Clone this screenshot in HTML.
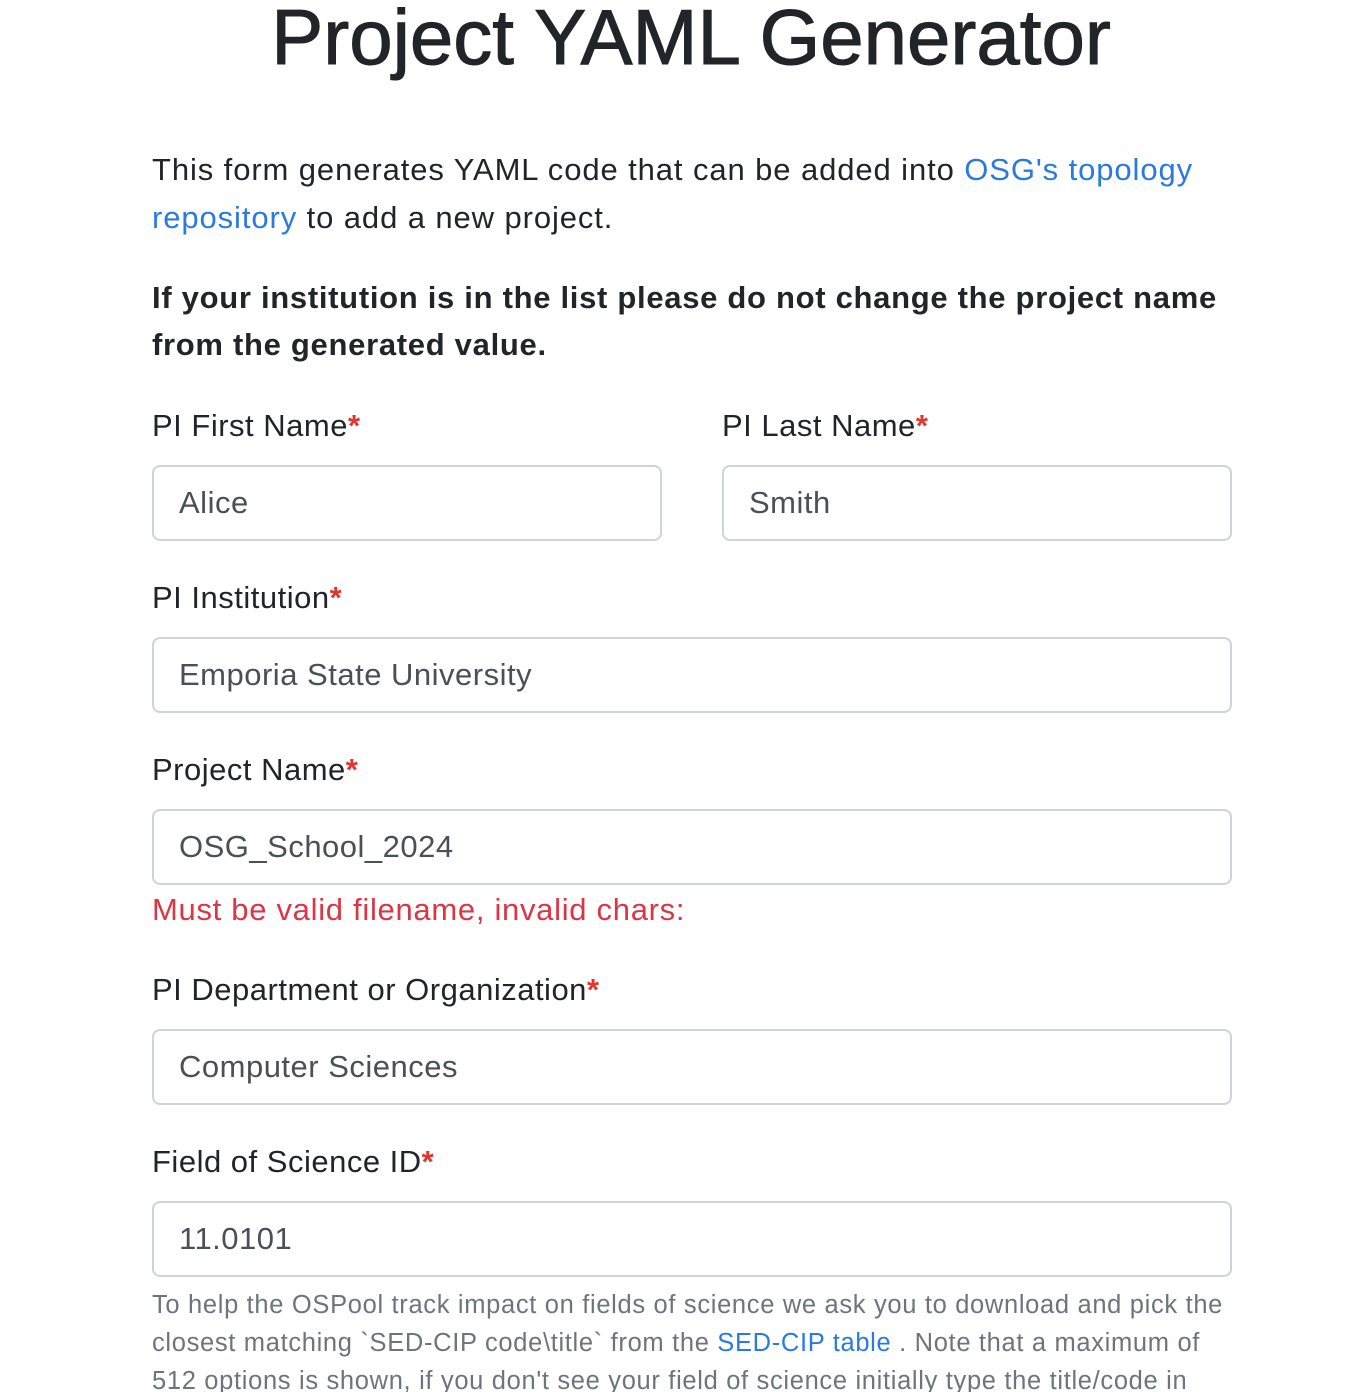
<!DOCTYPE html>
<html><head><meta charset="utf-8"><style>
html,body{margin:0;padding:0;background:#fff;width:1352px;height:1392px;overflow:hidden;position:relative;font-family:"Liberation Sans",Arial,sans-serif;color:#212529}
.a{position:absolute;white-space:nowrap}
h1{position:absolute;margin:0;left:0;width:1382px;text-align:center;top:-13px;font-size:78px;font-weight:500;line-height:100px;letter-spacing:0px;-webkit-text-stroke:1px #212529}
.t{font-size:31px;line-height:48px;letter-spacing:0.9px}
.b{letter-spacing:0.7px}
.lab{font-size:31px;line-height:40px;letter-spacing:0.5px}
.r{color:#e3342f;font-weight:bold}
a{color:#2a7ae2;text-decoration:none}
.in{position:absolute;left:152px;height:72px;border:2px solid #ced4da;border-radius:8px;font-size:31px;line-height:72px;padding-left:25px;box-sizing:content-box;color:#495057;width:1051px;letter-spacing:0.5px}
.help{font-size:25.5px;line-height:38px;color:#6c757d;letter-spacing:0.67px}
</style></head><body>
<h1>Project YAML Generator</h1>
<div class="a t" style="left:152px;top:146px">This form generates YAML code that can be added into <a>OSG's topology</a></div>
<div class="a t" style="left:152px;top:194px"><a>repository</a> to add a new project.</div>
<div class="a t b" style="left:152px;top:274px;font-weight:bold">If your institution is in the list please do not change the project name</div>
<div class="a t b" style="left:152px;top:321px;font-weight:bold">from the generated value.</div>

<div class="a lab" style="left:152px;top:406px">PI First Name<span class="r">*</span></div>
<div class="a lab" style="left:722px;top:406px">PI Last Name<span class="r">*</span></div>
<div class="in" style="top:465px;width:481px">Alice</div>
<div class="in" style="top:465px;left:722px;width:481px">Smith</div>

<div class="a lab" style="left:152px;top:578px">PI Institution<span class="r">*</span></div>
<div class="in" style="top:637px">Emporia State University</div>

<div class="a lab" style="left:152px;top:750px">Project Name<span class="r">*</span></div>
<div class="in" style="top:809px">OSG_School_2024</div>
<div class="a lab" style="left:152px;top:890px;color:#dc3545;letter-spacing:0.7px">Must be valid filename, invalid chars:</div>

<div class="a lab" style="left:152px;top:970px">PI Department or Organization<span class="r">*</span></div>
<div class="in" style="top:1029px">Computer Sciences</div>

<div class="a lab" style="left:152px;top:1142px">Field of Science ID<span class="r">*</span></div>
<div class="in" style="top:1201px">11.0101</div>

<div class="a help" style="left:152px;top:1286px">To help the OSPool track impact on fields of science we ask you to download and pick the</div>
<div class="a help" style="left:152px;top:1324px">closest matching `SED-CIP code\title` from the <a>SED-CIP table</a> . Note that a maximum of</div>
<div class="a help" style="left:152px;top:1362px">512 options is shown, if you don't see your field of science initially type the title/code in</div>
</body></html>
